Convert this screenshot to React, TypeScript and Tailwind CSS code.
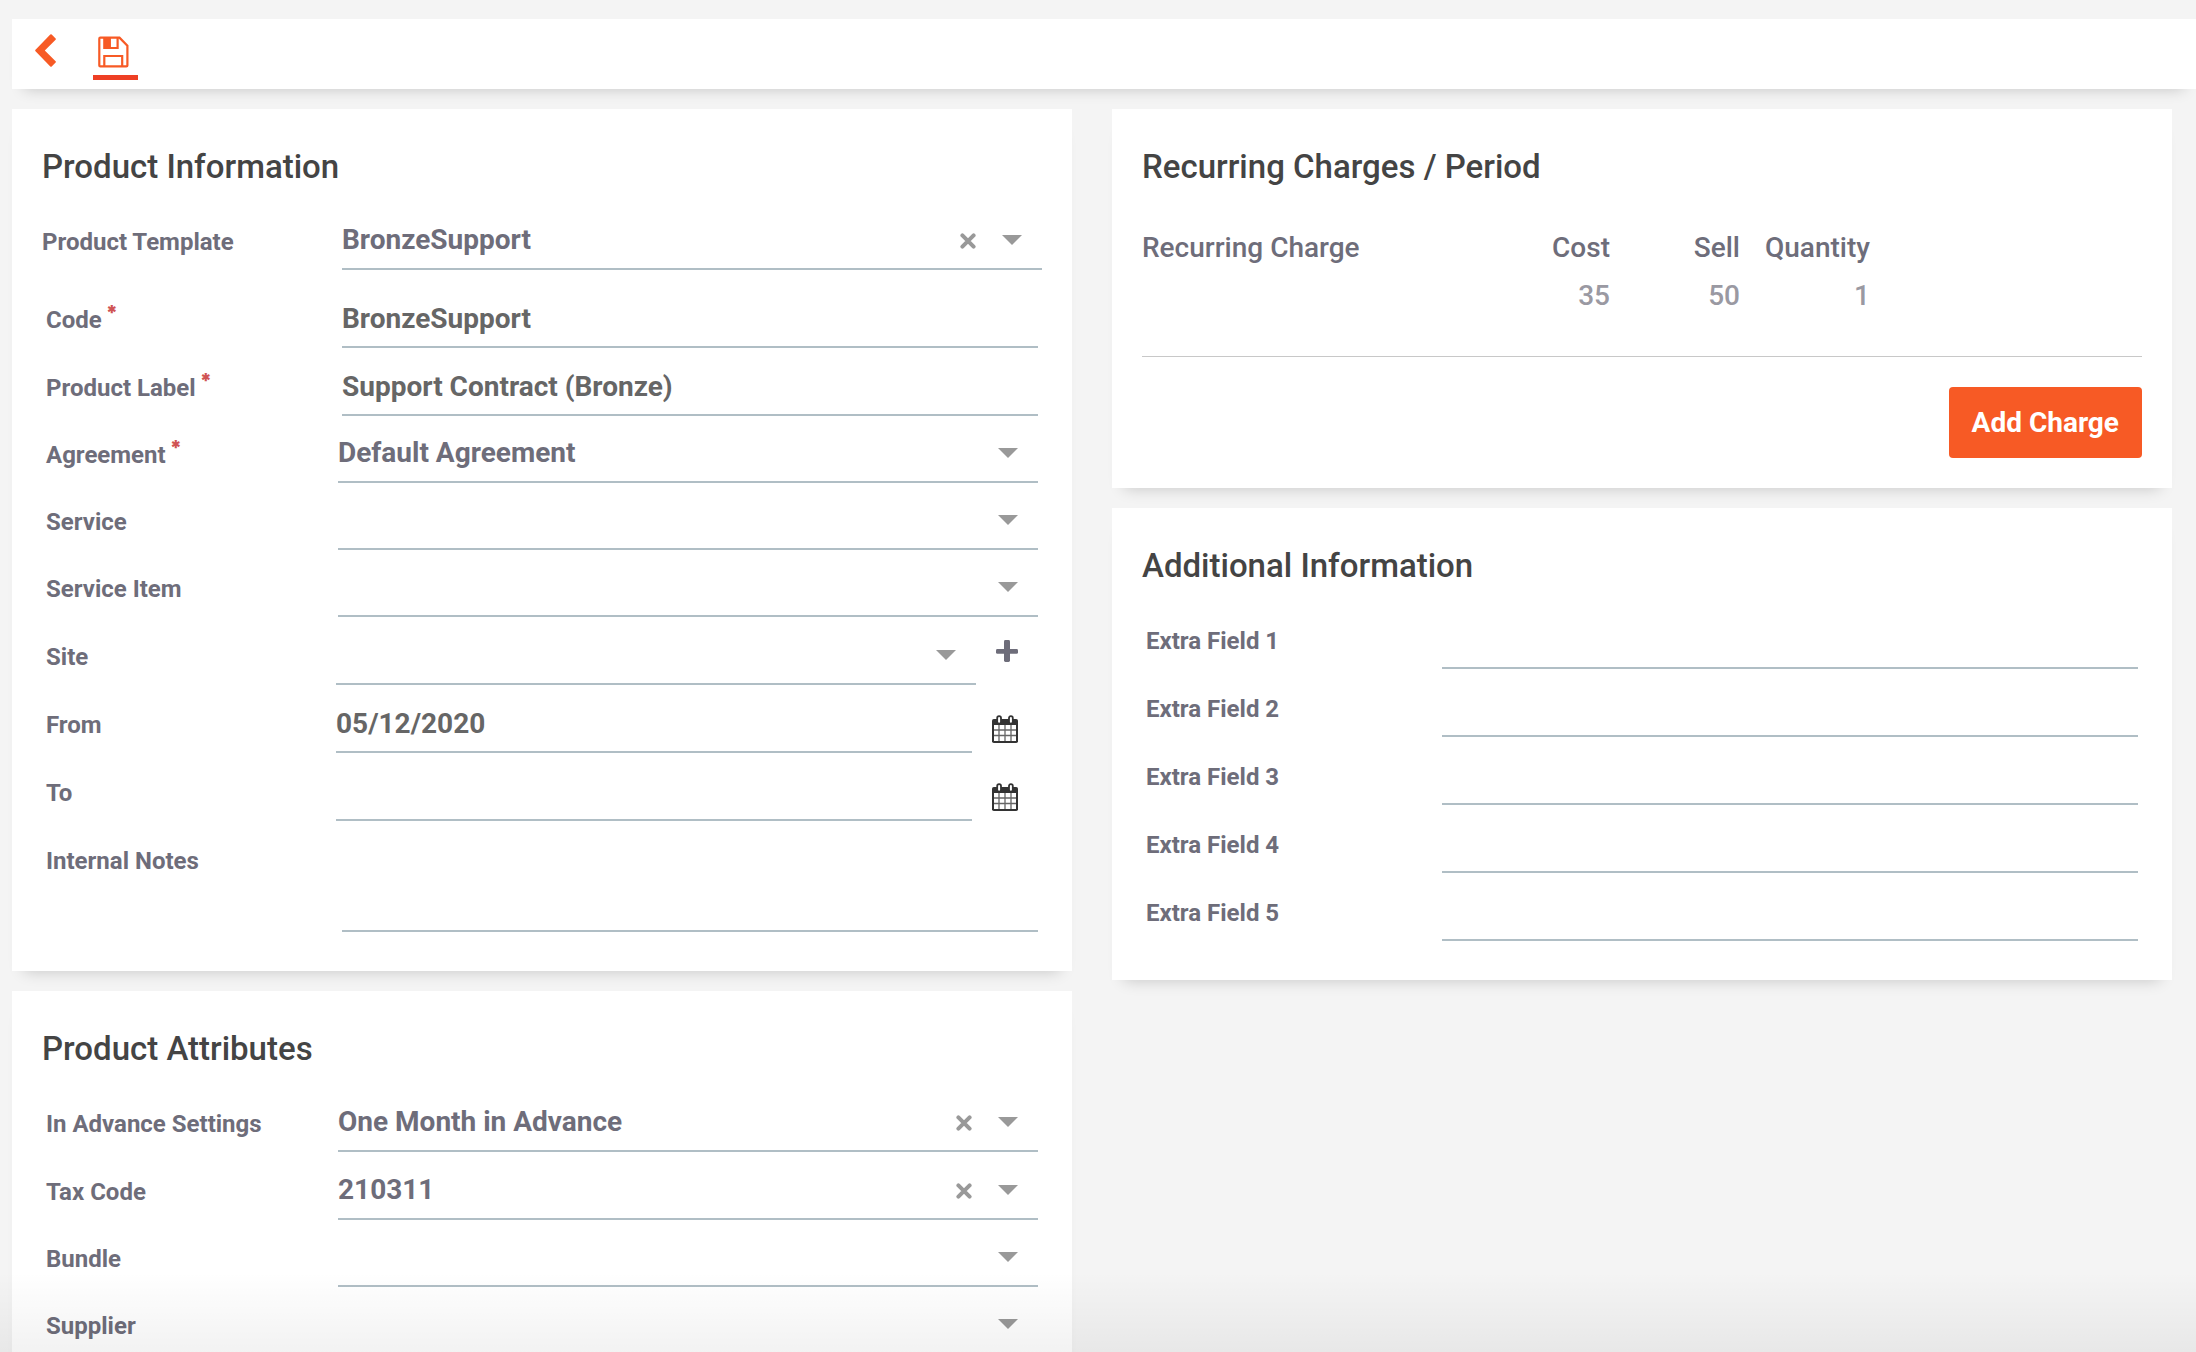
import {useState} from "react";
import type {ReactNode} from "react";

const inputClass =
    "block w-full h-12 border-b-2 border-[#b0bec5] bg-transparent pb-[10px] text-[28px] leading-9 font-bold text-[#666] outline-none";

const selectClass =
    "block w-full h-12 appearance-none border-b-2 border-[#b0bec5] bg-transparent pb-[10px] pr-24 text-[28px] leading-9 font-bold text-[#6e6d7a] outline-none";

const BackIcon = () => (
    <svg viewBox="0 0 21 33" className="h-[33px] w-[21px]" fill="currentColor" aria-hidden="true">
        <path d="M15.3 0.5a1 1 0 0 1 1.4 0L20.6 4.4a1 1 0 0 1 0 1.4L9.8 16.5L20.6 27.2a1 1 0 0 1 0 1.4L16.7 32.5a1 1 0 0 1-1.4 0L0.5 17.2a1 1 0 0 1 0-1.4Z" />
    </svg>
);

const SaveIcon = () => (
    <svg viewBox="0 0 45 41" className="h-[41px] w-[45px]" fill="none" stroke="currentColor" strokeWidth="2.2" aria-hidden="true">
        <path d="M7.3 3.7H26.5L34.4 11.6V31.4a1 1 0 0 1-1 1H7.3a1 1 0 0 1-1-1V4.7a1 1 0 0 1 1-1Z" />
        <path d="M11.3 3.7V14H24.6V3.7" />
        <path d="M11.3 3.7H17.7V14H11.3Z" fill="currentColor" stroke="none" />
        <path d="M17.2 3.7V14" strokeWidth="1.2" />
        <path d="M11.3 32.4V22H29.2V32.4" />
    </svg>
);

const ClearIcon = () => (
    <svg viewBox="0 0 16 16" className="h-4 w-4" stroke="currentColor" strokeWidth="4" strokeLinecap="round" aria-hidden="true">
        <path d="M2.4 2.4L13.6 13.6M13.6 2.4L2.4 13.6" />
    </svg>
);

const PlusIcon = () => (
    <svg viewBox="0 0 22 22" className="h-[22px] w-[22px]" fill="currentColor" aria-hidden="true">
        <rect x="8" y="0" width="6" height="22" rx="1.4" />
        <rect x="0" y="9" width="22" height="4.8" rx="1.4" />
    </svg>
);

const CalendarIcon = () => (
    <svg viewBox="0 0 26 28" className="h-7 w-[26px]" fill="none" aria-hidden="true">
        <rect x="0" y="4" width="26" height="24" rx="1.8" fill="#333" />
        <rect x="2" y="10" width="22" height="16" fill="#fff" />
        <path d="M7 10V26M13 10V26M19 10V26M2 15H24M2 20.5H24" stroke="#333" strokeWidth="1.3" strokeOpacity="0.75" />
        <rect x="5.2" y="1.2" width="3.8" height="7.4" rx="1.9" fill="#fff" stroke="#333" strokeWidth="1.8" />
        <rect x="17" y="1.2" width="3.8" height="7.4" rx="1.9" fill="#fff" stroke="#333" strokeWidth="1.8" />
    </svg>
);

const Card = ({title, children}: {title: string; children: ReactNode}) => (
    <section className="bg-white px-[30px] pt-[38px] shadow-[0_12px_15px_-12px_rgba(0,0,0,0.2)]">
        <h2 className="text-[33px] leading-10 font-medium text-[#444]">{title}</h2>
        {children}
    </section>
);

const Label = ({id, required, children}: {id: string; required?: boolean; children: ReactNode}) => (
    <label htmlFor={id} className="mb-3 block text-2xl font-bold text-[#6e6d7a]">
        {children}
        {required && <sup className="-top-2 ml-1 font-[Inter,sans-serif] text-xl font-black text-[#d05454]">*</sup>}
    </label>
);

type FieldProps = {id: string; label: string; value?: string; required?: boolean};

const TextField = ({id, label, value = "", required}: FieldProps) => (
    <div className="flex h-17 items-end px-1">
        <div className="w-74 shrink-0">
            <Label id={id} required={required}>{label}</Label>
        </div>
        <input id={id} type="text" defaultValue={value} className={inputClass} />
    </div>
);

const Combo = ({id, label, value = "", clearable}: {id: string; label: string; value?: string; clearable?: boolean}) => {
    const [selected, setSelected] = useState(value);

    return (
        <div className="relative min-w-0 flex-1">
            <select id={id} value={selected} onChange={(e) => setSelected(e.target.value)} className={selectClass}>
                <option value=""></option>
                {value && <option value={value}>{value}</option>}
            </select>
            {clearable && selected && (
                <button
                    type="button"
                    aria-label={`Clear ${label}`}
                    onClick={() => setSelected("")}
                    className="absolute right-[66px] bottom-[21px] text-[#999]"
                >
                    <ClearIcon />
                </button>
            )}
            <svg viewBox="0 0 20 10" className="pointer-events-none absolute right-5 bottom-[25px] h-[10px] w-5 text-[#999]" fill="currentColor" aria-hidden="true">
                <path d="M0 0H20L10 10Z" />
            </svg>
        </div>
    );
};

const SelectField = ({id, label, value, required}: FieldProps) => (
    <div className="flex h-[67px] items-end px-1">
        <div className="w-73 shrink-0">
            <Label id={id} required={required}>{label}</Label>
        </div>
        <Combo id={id} label={label} value={value} />
    </div>
);

const ClearableField = ({id, label, value}: FieldProps) => (
    <div className="flex h-17 items-end px-1">
        <div className="w-73 shrink-0">
            <Label id={id}>{label}</Label>
        </div>
        <Combo id={id} label={label} value={value} clearable />
    </div>
);

const DateField = ({id, label, value = ""}: FieldProps) => (
    <div className="flex h-17 items-end px-1">
        <div className="w-[290px] shrink-0">
            <Label id={id}>{label}</Label>
        </div>
        <input id={id} type="text" defaultValue={value} className={inputClass} />
        <button type="button" aria-label={`Pick ${label} date`} className="mb-[10px] shrink-0 pr-5 pl-5">
            <CalendarIcon />
        </button>
    </div>
);

const extraFields = ["Extra Field 1", "Extra Field 2", "Extra Field 3", "Extra Field 4", "Extra Field 5"];

const charges = [{name: "", cost: 35, sell: 50, quantity: 1}];

export default function App() {
    return (
        <div className="relative h-screen overflow-hidden bg-[#f4f4f4] font-[Roboto,sans-serif]">
            <div className="h-full overflow-y-auto pt-[19px] pl-3 [scrollbar-width:none]">
                {/* Toolbar */}
                <header className="flex h-[70px] items-start gap-[37px] bg-white pt-[15px] pl-[23px] text-[#f75a25] shadow-[0_12px_15px_-12px_rgba(0,0,0,0.2)]">
                    <button type="button" aria-label="Back">
                        <BackIcon />
                    </button>
                    <button type="button" aria-label="Save" className="border-b-[5px] border-[#ee3f24]">
                        <SaveIcon />
                    </button>
                </header>

                <main className="mt-5 grid grid-cols-2 items-start gap-10 pr-6">
                    <div className="flex flex-col gap-5">
                        <Card title="Product Information">
                            <div className="mt-[15px] pb-[39px]">
                                <div className="mb-[10px] flex h-17 items-end">
                                    <div className="w-75 shrink-0">
                                        <Label id="template">Product Template</Label>
                                    </div>
                                    <Combo id="template" label="Product Template" value="BronzeSupport" clearable />
                                </div>
                                <TextField id="code" label="Code" value="BronzeSupport" required />
                                <TextField id="label" label="Product Label" value="Support Contract (Bronze)" required />
                                <SelectField id="agreement" label="Agreement" value="Default Agreement" required />
                                <SelectField id="service" label="Service" />
                                <SelectField id="service-item" label="Service Item" />
                                <div className="flex h-17 items-end px-1">
                                    <div className="w-[290px] shrink-0">
                                        <Label id="site">Site</Label>
                                    </div>
                                    <Combo id="site" label="Site" />
                                    <button type="button" aria-label="Add site" className="mb-[23px] shrink-0 px-5 text-[#6e6d7a]">
                                        <PlusIcon />
                                    </button>
                                </div>
                                <DateField id="from" label="From" value="05/12/2020" />
                                <DateField id="to" label="To" />
                                <div className="flex h-[111px] px-1">
                                    <div className="w-74 shrink-0 pt-6">
                                        <Label id="notes">Internal Notes</Label>
                                    </div>
                                    <textarea
                                        id="notes"
                                        className="block w-full resize-none border-b-2 border-[#b0bec5] bg-transparent pt-5 text-[28px] leading-9 font-bold text-[#666] outline-none"
                                    />
                                </div>
                            </div>
                        </Card>

                        <Card title="Product Attributes">
                            <div className="mt-[15px] pb-[39px]">
                                <ClearableField id="advance" label="In Advance Settings" value="One Month in Advance" />
                                <ClearableField id="tax" label="Tax Code" value="210311" />
                                <SelectField id="bundle" label="Bundle" />
                                <SelectField id="supplier" label="Supplier" />
                            </div>
                        </Card>
                    </div>

                    <div className="flex flex-col gap-5">
                        <Card title="Recurring Charges / Period">
                            <div className="mt-[37px] border-b border-[#c8c8c8] pb-9">
                                <table className="w-full table-fixed text-[28px] leading-12 font-medium text-[#6e6d7a]">
                                    <thead>
                                        <tr>
                                            <th className="w-[32%] text-left font-medium">Recurring Charge</th>
                                            <th className="w-[15%] pr-0.5 text-right font-medium">Cost</th>
                                            <th className="w-[13%] pr-0.5 text-right font-medium">Sell</th>
                                            <th className="w-[13%] pr-0.5 text-right font-medium">Quantity</th>
                                            <td></td>
                                        </tr>
                                    </thead>
                                    <tbody>
                                        {charges.map((charge, i) => (
                                            <tr key={i} className="text-[#9a99a2]">
                                                <td>{charge.name}</td>
                                                <td className="pr-0.5 text-right">{charge.cost}</td>
                                                <td className="pr-0.5 text-right">{charge.sell}</td>
                                                <td className="pr-0.5 text-right">{charge.quantity}</td>
                                                <td></td>
                                            </tr>
                                        ))}
                                    </tbody>
                                </table>
                            </div>
                            <div className="flex justify-end py-[30px]">
                                <button type="button" className="h-[71px] rounded bg-[#f75a25] px-[23px] text-[28px] font-bold text-white">
                                    Add Charge
                                </button>
                            </div>
                        </Card>

                        <Card title="Additional Information">
                            <div className="mt-[15px] pb-[39px]">
                                {extraFields.map((field, i) => (
                                    <TextField key={field} id={`extra-${i + 1}`} label={field} />
                                ))}
                            </div>
                        </Card>
                    </div>
                </main>
            </div>

            {/* Fade along the bottom edge */}
            <div className="pointer-events-none absolute inset-x-0 bottom-0 h-20 bg-linear-to-t from-black/5 to-transparent" />
        </div>
    );
}
